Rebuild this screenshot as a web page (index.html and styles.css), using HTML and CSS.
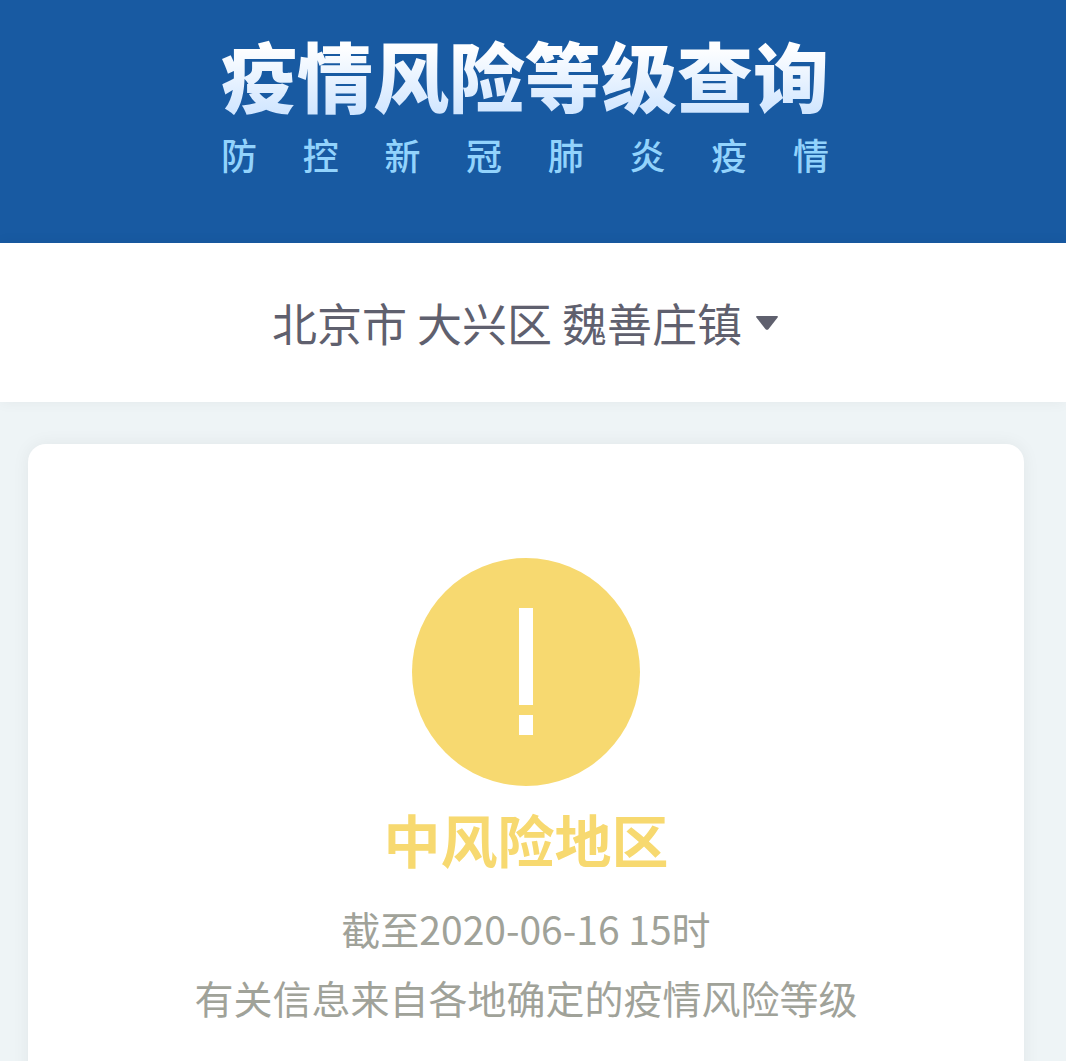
FILE: index.html
```html
<!DOCTYPE html>
<html lang="zh-CN">
<head>
    <meta charset="UTF-8">
    <meta name="viewport" content="width=device-width, initial-scale=1.0">
    <title>疫情风险等级查询</title>
    <link rel="stylesheet" href="styles.css">
</head>
<body>
<header class="banner">
    <h1 class="banner-title">疫情风险等级查询</h1>
    <p class="banner-subtitle">
        <span>防</span><span>控</span><span>新</span><span>冠</span><span>肺</span><span>炎</span><span>疫</span><span>情</span>
    </p>
</header>

<div class="region-bar">
    <button type="button" class="region-button">
        北京市 大兴区 魏善庄镇
        <svg class="arrow" viewBox="0 0 22 14" aria-hidden="true">
            <path d="M1 0h20q1.500 .3 .6 1.600l-9 11.400q-1.600 1.700-3.200 0l-9-11.400Q-.5 .3 1 0z"/>
        </svg>
    </button>
</div>

<main class="content">
    <section class="card">
        <svg class="level-icon" viewBox="0 0 228 228" aria-hidden="true">
            <circle cx="114" cy="114" r="114" fill="#f7d970"/>
            <path d="M107 50h14v97h-14zM107 157h14v20h-14z" fill="#fff"/>
        </svg>
        <h2 class="level">中风险地区</h2>
        <p class="note">截至2020-06-16 15时</p>
        <p class="note">有关信息来自各地确定的疫情风险等级</p>
    </section>
</main>
</body>
</html>
```

FILE: styles.css
```css
* {
    box-sizing: border-box;
}
body {
    font-family: "Noto Sans CJK SC", sans-serif;
    background: #eef4f6;
    margin: 0;
}
h1, h2, p {
    margin: 0;
}

/* Header */
.banner {
    display: flex;
    flex-direction: column;
    align-items: center;
    padding: 28px 16px 65px 0;
    background: #185aa2;
}
.banner-title {
    font-size: 76px;
    font-weight: 900;
    line-height: 92px;
    color: transparent;
    background: linear-gradient(#fff 20%, #cfe5ff 95%);
    -webkit-background-clip: text;
    background-clip: text;
}
.banner-subtitle {
    display: flex;
    justify-content: space-between;
    width: 608px;
    margin-top: 10px;
    font-size: 36px;
    font-weight: 500;
    line-height: 48px;
    color: #92d3fc;
}

/* Region picker */
.region-bar {
    display: flex;
    justify-content: center;
    padding: 48px 16px 47px 0;
    background: #fff;
    box-shadow: 0 0 14px rgba(0, 0, 0, 0.05);
}
.region-button {
    display: flex;
    align-items: center;
    gap: 14px;
    padding: 0;
    border: none;
    background: none;
    font-family: inherit;
    font-size: 45px;
    line-height: 64px;
    color: #5f606e;
    cursor: pointer;
}
.arrow {
    width: 22px;
    height: 14px;
    fill: #5f606e;
}

/* Result card */
.content {
    padding: 42px 42px 0 28px;
}
.card {
    display: flex;
    flex-direction: column;
    align-items: center;
    padding: 114px 0 60px;
    background: #fff;
    border-radius: 18px;
    box-shadow: 0 0 18px rgba(0, 0, 0, 0.06);
}
.level-icon {
    width: 228px;
    height: 228px;
}
.level {
    margin: 10px 0 14px;
    font-size: 57px;
    font-weight: 700;
    line-height: 84px;
    color: #f7d970;
}
.note {
    font-size: 39px;
    line-height: 69px;
    color: #a0a299;
}
```
